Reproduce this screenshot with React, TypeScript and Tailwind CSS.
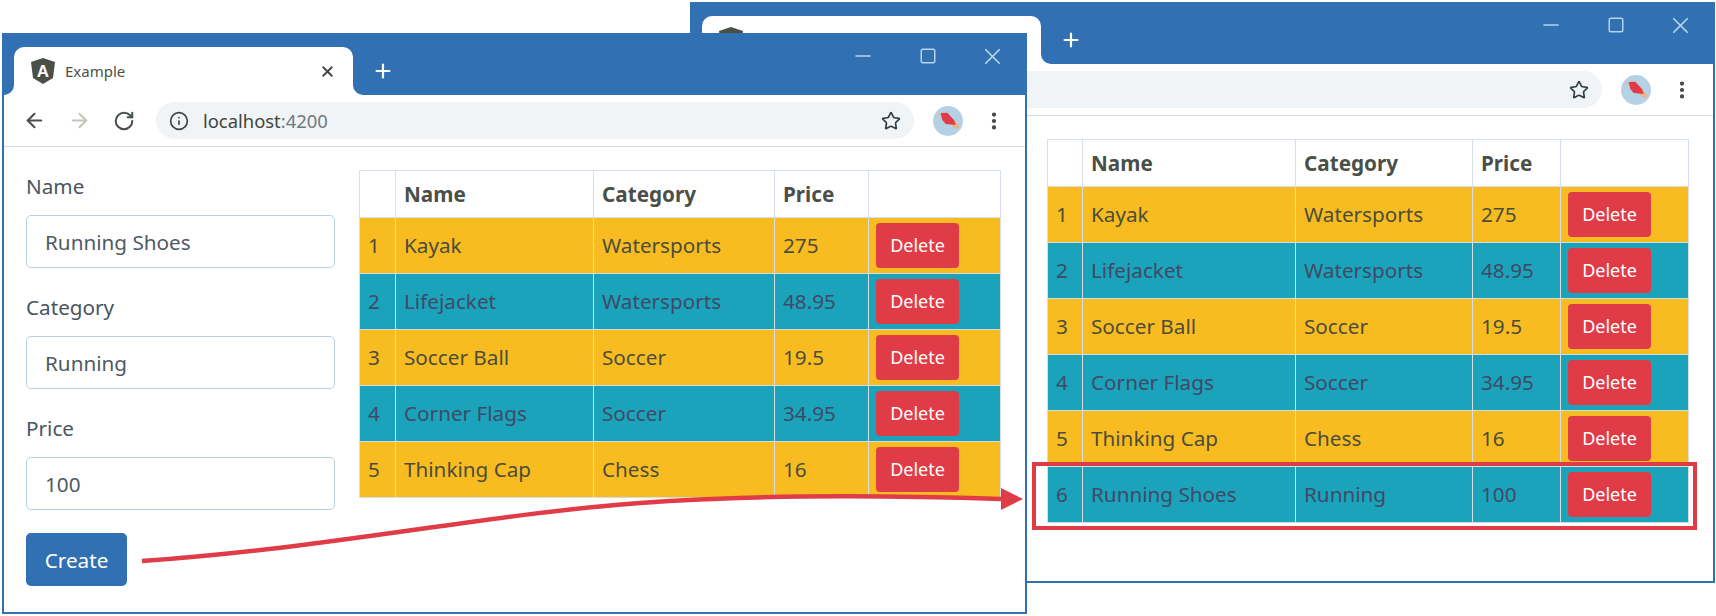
import { ArrowLeft, ArrowRight, Info, Minus, MoreVertical, Plus, RotateCw, Square, Star, X } from "lucide-react";

const baseRows = [
    { id: 1, name: "Kayak", category: "Watersports", price: "275" },
    { id: 2, name: "Lifejacket", category: "Watersports", price: "48.95" },
    { id: 3, name: "Soccer Ball", category: "Soccer", price: "19.5" },
    { id: 4, name: "Corner Flags", category: "Soccer", price: "34.95" },
    { id: 5, name: "Thinking Cap", category: "Chess", price: "16" },
];

const allRows = [...baseRows, { id: 6, name: "Running Shoes", category: "Running", price: "100" }];

const fields = [
    { label: "Name", value: "Running Shoes" },
    { label: "Category", value: "Running" },
    { label: "Price", value: "100" },
];

function AngularLogo() {
    return (
        <svg width="24" height="26" viewBox="0 0 24 26" className="shrink-0">
            <polygon points="12,0 24,4 22,20 12,26 2,20 0,4" fill="#4a5048" />
            <text x="12" y="19" textAnchor="middle" fontSize="17" fontWeight="700" fill="#ffffff" fontFamily="Liberation Sans, sans-serif">
                A
            </text>
        </svg>
    );
}

function BirdAvatar() {
    return (
        <div className="h-[30px] w-[30px] rounded-full bg-[#b5d1e4]">
            <svg width="30" height="30" viewBox="0 0 30 30">
                <path d="M4.5 8 L8 7.5 L8 10 Z" fill="#e8b48c" />
                <path d="M22 14 L26.5 21 L24 23 L19 20.5 Z" fill="#e8b48c" />
                <path d="M7.7 7 L14.3 6.7 L21 14 L22.7 19 L12.7 18 L9.3 14 Z" fill="#e03c48" />
            </svg>
        </div>
    );
}

function TabStrip() {
    return (
        <div className="relative h-[62px] shrink-0 bg-[#3070b3]">
            <div className="absolute top-[14px] left-[10px] flex h-[48px] w-[339px] items-center rounded-t-[10px] bg-white px-[17px]">
                <AngularLogo />
                <span className="ml-[10px] flex-1 text-[15px] text-[#4a5048]">Example</span>
                <X size={17} strokeWidth={2.6} className="text-[#3f463f]" />
                <div className="absolute bottom-0 -left-[10px] h-[10px] w-[10px] bg-white">
                    <div className="h-full w-full rounded-br-[10px] bg-[#3070b3]" />
                </div>
                <div className="absolute -right-[10px] bottom-0 h-[10px] w-[10px] bg-white">
                    <div className="h-full w-full rounded-bl-[10px] bg-[#3070b3]" />
                </div>
            </div>
            <Plus size={22} strokeWidth={2.4} className="absolute top-[27px] left-[368px] text-white" />
            <div className="absolute top-[6px] right-0 flex h-[34px] text-[#b8d4e8]">
                <div className="flex w-[65px] items-center justify-center">
                    <Minus size={24} strokeWidth={1.6} />
                </div>
                <div className="flex w-[65px] items-center justify-center">
                    <Square size={18} strokeWidth={2} />
                </div>
                <div className="flex w-[65px] items-center justify-center">
                    <X size={27} strokeWidth={1.5} />
                </div>
            </div>
        </div>
    );
}

function Toolbar() {
    return (
        <div className="flex h-[52px] shrink-0 items-center border-b border-[#d3dde6] bg-white pr-[20px]">
            <div className="flex w-[152px] shrink-0 items-center gap-[22px] pl-[19px]">
                <ArrowLeft size={23} strokeWidth={2.2} className="text-[#465046]" />
                <ArrowRight size={23} strokeWidth={2.2} className="text-[#c9c4bb]" />
                <RotateCw size={22} strokeWidth={2.2} className="text-[#465046]" />
            </div>
            <div className="flex h-[37px] flex-1 items-center rounded-full bg-[#f1f4f6] px-[13px]">
                <Info size={20} strokeWidth={2} className="text-[#3f463f]" />
                <span className="ml-[14px] text-[18.4px] text-[#3f463f]">
                    localhost<span className="text-[#6d7a80]">:4200</span>
                </span>
                <Star size={20} strokeWidth={2} className="ml-auto text-[#2f3f4a]" />
            </div>
            <div className="ml-[19px] shrink-0">
                <BirdAvatar />
            </div>
            <MoreVertical size={22} strokeWidth={2.6} className="ml-[20px] shrink-0 text-[#3f463f]" />
        </div>
    );
}

function ProductTable({ rows, widths }: { rows: typeof allRows; widths: string[] }) {
    return (
        <table className="table-fixed border-collapse text-[20.7px] text-[#4a5048]">
            <colgroup>
                {widths.map((w, i) => (
                    <col key={i} style={{ width: w }} />
                ))}
            </colgroup>
            <thead>
                <tr className="h-[47px] font-bold">
                    <th className="border border-[#d5e0ea]"></th>
                    <th className="border border-[#d5e0ea] pt-[2px] pl-2 text-left">Name</th>
                    <th className="border border-[#d5e0ea] pt-[2px] pl-2 text-left">Category</th>
                    <th className="border border-[#d5e0ea] pt-[2px] pl-2 text-left">Price</th>
                    <th className="border border-[#d5e0ea]"></th>
                </tr>
            </thead>
            <tbody>
                {rows.map((r) => (
                    <tr key={r.id} className={`h-[56px] ${r.id % 2 ? "bg-[#f9bc20] text-[#4a4d3c]" : "bg-[#1ba3bb] text-[#3f4a68]"}`}>
                        <td className="border border-[#d5dfe2] pl-2">{r.id}</td>
                        <td className="border border-[#d5dfe2] pl-2">{r.name}</td>
                        <td className="border border-[#d5dfe2] pl-2">{r.category}</td>
                        <td className="border border-[#d5dfe2] pl-2">{r.price}</td>
                        <td className="border border-[#d5dfe2] pl-[7px]">
                            <button className="h-[45px] w-[83px] rounded-[4px] bg-[#e03c48] text-[18px] text-white">Delete</button>
                        </td>
                    </tr>
                ))}
            </tbody>
        </table>
    );
}

function ProductForm() {
    return (
        <div className="mt-[2px] w-[309px] shrink-0">
            {fields.map((f, i) => (
                <div key={f.label} className={i ? "mt-[25px]" : ""}>
                    <div className="mb-[15px] h-[28px] text-[20.7px] leading-[28px] text-[#4a5560]">{f.label}</div>
                    <div className="flex h-[53px] items-center rounded-[5px] border border-[#b9d0e2] px-[18px] pt-[3px] text-[20.7px] text-[#4f5a62]">
                        {f.value}
                    </div>
                </div>
            ))}
            <button className="mt-[23px] h-[53px] w-[101px] rounded-[5px] bg-[#3070b3] pt-[3px] text-[20.7px] text-white">Create</button>
        </div>
    );
}

export default function App() {
    return (
        <div className="relative h-[616px] w-[1716px] overflow-hidden bg-white font-['Noto_Sans',sans-serif]">
            {/* back window, after the new product was added */}
            <div className="absolute top-[2px] left-[690px] flex h-[581px] w-[1025px] flex-col border-x-2 border-b-2 border-[#3070b3] bg-white">
                <TabStrip />
                <Toolbar />
                <div className="pt-[23px] pl-[355px]">
                    <ProductTable rows={allRows} widths={["35px", "213px", "177px", "88px", "128px"]} />
                </div>
                <div className="absolute top-[460px] left-[340px] h-[68px] w-[665px] border-4 border-[#e03c48]" />
            </div>

            {/* front window */}
            <div className="absolute top-[33px] left-[2px] flex h-[581px] w-[1025px] flex-col border-x-2 border-b-2 border-[#3070b3] bg-white">
                <TabStrip />
                <Toolbar />
                <div className="flex items-start gap-[24px] pt-[23px] pl-[22px]">
                    <ProductForm />
                    <ProductTable rows={baseRows} widths={["36px", "198px", "181px", "94px", "132px"]} />
                </div>
            </div>

            {/* arrow from Create to the new row */}
            <svg className="pointer-events-none absolute top-0 left-0" width="1716" height="616">
                <path d="M142 561 C 330 548, 480 515, 640 503 C 760 494, 880 495, 1002 499" fill="none" stroke="#e03c48" strokeWidth="4.5" />
                <polygon points="1001,488 1023,499 1001,510" fill="#e03c48" />
            </svg>
        </div>
    );
}
